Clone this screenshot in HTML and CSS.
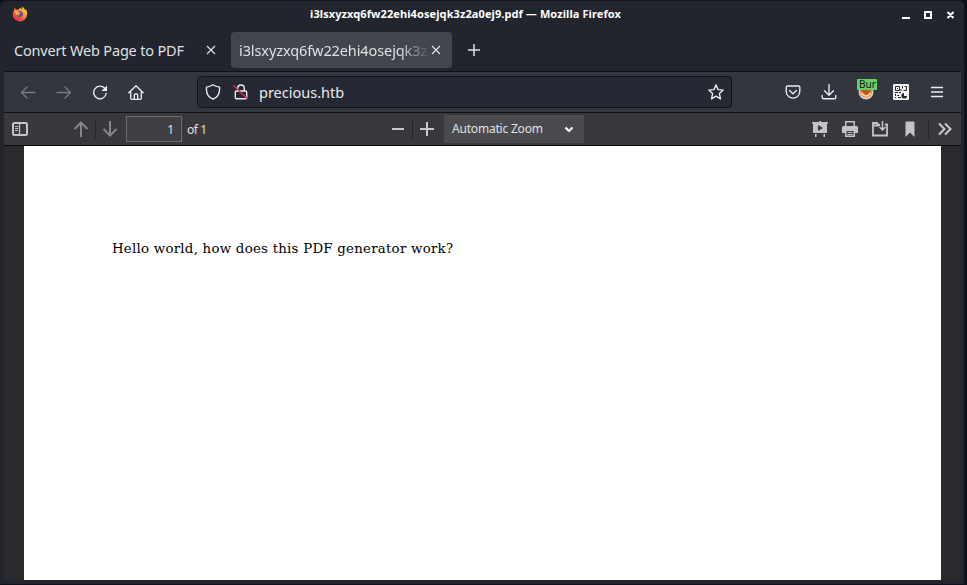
FILE: index.html
```html
<!DOCTYPE html>
<html lang="en">
<head>
<meta charset="utf-8">
<title>i3lsxyzxq6fw22ehi4osejqk3z2a0ej9.pdf — Mozilla Firefox</title>
<link rel="stylesheet" href="styles.css">
</head>
<body>
<div class="window">
  <header class="titlebar">
    <svg class="firefox" width="16" height="16" viewBox="0 0 16 16">
      <defs><linearGradient id="flame" x1="1" y1="0" x2="0.2" y2="1"><stop offset="0" stop-color="#ffe14d"/><stop offset=".4" stop-color="#ffa02e"/><stop offset=".75" stop-color="#f34b3c"/><stop offset="1" stop-color="#d82b55"/></linearGradient></defs>
      <path fill="url(#flame)" d="M2 4.2 2.6 2l2 1.7 2-.2C7.400 2.600 8 2 9.200 1.500c-.1 1 .2 1.600.8 2l.3-3c1 1.200 2.100 1.800 2.900 3.500l.8-.5c1.400 2.300 1.700 5 .4 7.500-1.200 2.800-3.700 4.500-6.600 4.500C3.600 15.500.8 12.500.8 8.600.8 6.800 1.200 5.400 2 4.200z"/>
      <path fill="#5a51b8" d="M5.200 5.400c1.600-.9 3.600-.8 4.900.5 1.300 1.500 1 3.900-.7 4.900-1.700.9-3.800.3-4.600-1.200 1.200.5 2.200.1 3-.8L5.400 7.500z"/>
      <path fill="#ffac32" d="m2.500 5 3-.1 1.100 1 1.900.5c-.2 1-1.300 1.100-1.700 2L4.200 9z"/>
    </svg>
    <h1 class="window-title">i3lsxyzxq6fw22ehi4osejqk3z2a0ej9.pdf — Mozilla Firefox</h1>
    <svg class="controls" width="54" height="12" viewBox="0 0 54 12" fill="none" stroke="#fff" stroke-width="2">
      <path d="M1 10h8M24 4h6v6h-6zM46.500 4l6 6M52.500 4l-6 6"/>
    </svg>
  </header>

  <nav class="tabs">
    <div class="tab">
      <span class="tab-label">Convert Web Page to PDF</span>
      <svg class="close" width="10" height="10" viewBox="0 0 10 10"><path d="m1 1 8 8M9 1 1 9"/></svg>
    </div>
    <div class="tab active">
      <span class="tab-label fade">i3lsxyzxq6fw22ehi4osejqk3z2</span>
      <svg class="close" width="10" height="10" viewBox="0 0 10 10"><path d="m1 1 8 8M9 1 1 9"/></svg>
    </div>
    <svg class="new-tab" width="14" height="14" viewBox="0 0 14 14"><path d="M7 1v12M1 7h12"/></svg>
  </nav>

  <div class="navbar">
    <svg class="icon dim back" width="16" height="16" viewBox="0 0 16 16"><path d="M15 8.500H1.500M7 3 1.500 8.500 7 14"/></svg>
    <svg class="icon dim forward" width="16" height="16" viewBox="0 0 16 16"><path d="M1 8.500h13.500M9 3 14.500 8.500 9 14"/></svg>
    <svg class="icon reload" width="16" height="16" viewBox="0 0 16 16"><path d="M14.200 9.500a6.300 6.300 0 1 1-1.500-5.200l1 1.200"/><path class="solid" d="M15 1.500v5.500H9.500z"/></svg>
    <svg class="icon home" width="16" height="16" viewBox="0 0 16 16"><path d="M.8 8.700 8 1.700l7.200 7M2.700 7.500V14c0 .8.500 1.300 1.200 1.300h8.200c.7 0 1.200-.5 1.200-1.300V7.500M6.300 15v-4c0-.7.400-1 1-1h1.400c.6 0 1 .3 1 1v4"/></svg>
    <div class="urlbar">
      <svg class="icon" width="16" height="16" viewBox="0 0 16 16"><path d="M8 .8c2 1.300 4 2 6.500 2.300.5 5.200-.8 9.700-6.500 12.100C2.300 12.800 1 8.300 1.500 3.100 4 2.800 6 2.100 8 .8z"/></svg>
      <svg class="icon lock" width="16" height="16" viewBox="0 0 16 16"><path d="M4.700 7V4.300a3.300 3.300 0 0 1 6.600 0V7M3.500 7h9c.8 0 1.200.4 1.200 1.200v5.300c0 .8-.4 1.200-1.200 1.200h-9c-.8 0-1.200-.4-1.200-1.200V8.200C2.300 7.400 2.700 7 3.500 7z"/><path class="slash" d="m.8 1.800 13.700 13"/></svg>
      <span class="url">precious.htb</span>
      <svg class="icon star" width="16" height="16" viewBox="0 0 16 16"><path d="m8 .9 2.100 4.700 5.100.5-3.800 3.500 1.100 5.200L8 12.200l-4.500 2.600 1.100-5.200L.8 6.100l5.100-.5z"/></svg>
    </div>
    <svg class="icon pocket" width="16" height="16" viewBox="0 0 16 16"><path d="M2.500 2h11c.8 0 1.300.5 1.300 1.300v4a6.800 6.800 0 0 1-13.600 0v-4C1.200 2.500 1.700 2 2.500 2zM4.500 6.500 8 9.800l3.500-3.300"/></svg>
    <svg class="icon download" width="16" height="16" viewBox="0 0 16 16"><path d="M8 .5v10.700M3.500 6.800 8 11.200l4.500-4.400M1.200 11.500v1.900c0 .8.500 1.300 1.300 1.300h11c.8 0 1.300-.5 1.300-1.300v-1.900"/></svg>
    <div class="proxy">
      <svg width="16" height="16" viewBox="0 0 16 16"><circle cx="8" cy="8" r="7.500" fill="#d5cbc2"/><circle cx="8" cy="7.500" r="6" fill="#ed8b35"/><path d="M2 5h12l-3 4.500-3 1.500-3-2z" fill="#b95921"/><path d="M3.500 9q4.500 6 9 0" stroke="#ffd4a0" stroke-width="1.500" fill="none"/></svg>
      <span class="badge">Bur</span>
    </div>
    <svg class="qr" width="16" height="16" viewBox="0 0 16 16" fill="none" stroke="#24262c"><rect width="16" height="16" rx="1" fill="#f4f4f5" stroke="none"/><path d="M2.500 2.500h4v4h-4zM9.500 2v2.500M11.500 2.500h2v4h-3M4 4.500h1M8 5v2M2 8.500h3M6 8.500h2M2.500 10v2M4 11.500h2M5 13.500h3M2 13.500h1"/><path d="M11 9v3h3a2.800 2.800 0 1 1-3-3z" fill="#24262c" stroke="none"/></svg>
    <svg class="icon menu" width="12" height="12" viewBox="0 0 12 12"><path d="M0 1.500h12M0 6h12M0 10.500h12"/></svg>
  </div>

  <div class="pdfbar">
    <svg class="sidebar" width="16" height="14" viewBox="0 0 16 14" fill="none" stroke="#c4c4c8"><rect x="1" y="1" width="14" height="12" rx="1.500" stroke-width="2"/><path d="M7.500 1v12" stroke-width="1.300"/><path d="M3 4.500h3M3 6.500h3M3 8.500h3"/></svg>
    <svg class="pdim up" width="16" height="16" viewBox="0 0 16 16"><path d="M8 16V1.500M1.500 8 8 1.500 14.500 8"/></svg>
    <i class="sep"></i>
    <svg class="pdim down" width="16" height="16" viewBox="0 0 16 16"><path d="M8 0v14.500M1.500 8 8 14.500 14.500 8"/></svg>
    <div class="page-number">1</div>
    <span class="page-count">of 1</span>
    <svg class="picon minus" width="12" height="14" viewBox="0 0 12 14"><path d="M0 7h12"/></svg>
    <i class="sep sep-zoom"></i>
    <svg class="picon plus" width="14" height="14" viewBox="0 0 14 14"><path d="M7 0v14M0 7h14"/></svg>
    <div class="zoom"><span class="zoom-label">Automatic Zoom</span><svg width="10" height="8" viewBox="0 0 10 8"><path d="m1.500 2.500 3.500 3.500L8.500 2.500" fill="none" stroke="#fff" stroke-width="2.200"/></svg></div>
    <div class="tools">
      <svg width="16" height="16" viewBox="0 0 16 16"><path fill="#c4c4c8" fill-rule="evenodd" d="M7 0h2v1h7v1.500h-1V12H1V2.500H0V1h7zM6 4v6l5-3zM3 13h1.500v3H3zM11.500 13H13v3h-1.500z"/></svg>
      <svg width="16" height="16" viewBox="0 0 16 16"><path fill="#c4c4c8" fill-rule="evenodd" d="M3 0h10v5h1.500q1.500 0 1.500 1.500V12h-3v4H3v-4H0V6.500Q0 5 1.500 5H3zM4.500 1.500V5h7V1.500zM4.500 10v4.500h7V10zM5.500 11h5v1h-5zM5.500 13h5v1h-5z"/></svg>
      <svg width="16" height="16" viewBox="0 0 16 16" fill="none" stroke="#c4c4c8" stroke-width="1.800"><path d="M8 4H6.500L5 2H1v12.500h14V3.500h-2M1 4.500h6"/><path d="M10.500 0v9M7.500 6l3 3 3-3" stroke-width="1.500"/></svg>
      <svg width="16" height="16" viewBox="0 0 16 16"><path fill="#c4c4c8" d="M3.500 1.500q0-1 1-1h7q1 0 1 1V16L8 11.500 3.500 16z"/></svg>
    </div>
    <i class="sep sep-tools"></i>
    <svg class="picon more" width="14" height="14" viewBox="0 0 14 14"><path d="M1 1.500 6.500 7 1 12.500M7 1.500 12.500 7 7 12.500"/></svg>
  </div>

  <main class="viewer"><div class="page"><p class="text">Hello world, how does this PDF generator work?</p></div></main>
</div>
</body>
</html>
```
FILE: styles.css
```css
* { box-sizing: border-box; }
body {
  margin: 0;
  width: 967px;
  height: 585px;
  overflow: hidden;
  background: #0f1119;
  font-family: "Noto Sans", sans-serif;
}
svg { display: block; flex: none; }
.window {
  width: 965px;
  height: 584px;
  border-top: 1px solid #12141c;
  border-right: 1px solid #12141c;
  border-radius: 6px 6px 0 0;
  background: #22252e;
  display: flex;
  flex-direction: column;
}
.titlebar { height: 27px; flex: none; display: flex; align-items: center; padding-bottom: 2px; }
.firefox { margin-left: 12px; }
.window-title {
  margin: 0 0 0 282px;
  width: 311px;
  font-size: 11px;
  line-height: 16px;
  font-weight: 700;
  letter-spacing: 0.09px;
  color: #fff;
  white-space: nowrap;
}
.controls { margin-left: 280px; }
.tabs { height: 43px; flex: none; display: flex; align-items: center; padding-left: 4px; }
.tab {
  width: 221px;
  height: 36px;
  padding: 0 9px 0 10px;
  margin-right: 6px;
  border-radius: 4px;
  display: flex;
  align-items: center;
  justify-content: space-between;
}
.tab.active { padding: 0 11px 0 8px; background: #42454d; }
.tab-label { font-size: 14.500px; line-height: 20px; letter-spacing: -0.18px; color: #dfe0e3; white-space: nowrap; }
.tab.active .tab-label { width: 190px; letter-spacing: -0.1px; }
.fade { -webkit-mask-image: linear-gradient(90deg, #000 160px, transparent 192px); mask-image: linear-gradient(90deg, #000 160px, transparent 192px); }
.close, .new-tab { fill: none; stroke: #dfe0e3; stroke-width: 1.200; }
.new-tab { margin-left: 9px; stroke-width: 1.500; }
.navbar {
  height: 42px;
  flex: none;
  margin: 0 3px 0 4px;
  border-top: 1px solid #101219;
  border-bottom: 1px solid #101219;
  background: #33363e;
  display: flex;
  align-items: center;
}
.icon { fill: none; stroke: #ececf0; stroke-width: 1.350; stroke-linejoin: round; stroke-linecap: round; }
.dim { stroke: #777a80; }
.solid { fill: #ececf0; stroke: none; }
.slash { stroke: #e22850; stroke-width: 1.500; }
.back { margin-left: 16px; }
.forward { margin-left: 20px; }
.reload { margin-left: 20px; }
.home { margin-left: 20px; }
.urlbar {
  width: 535px;
  height: 32px;
  margin-left: 53px;
  padding: 0 7px;
  border: 1px solid #101219;
  border-radius: 4px;
  background: #262933;
  display: flex;
  align-items: center;
}
.lock { margin-left: 12px; }
.url { margin-left: 10px; font-size: 14.500px; line-height: 20px; color: #e8e8eb; }
.star { margin-left: auto; }
.pocket { margin-left: 53px; }
.download { margin-left: 20px; }
.proxy { position: relative; width: 16px; height: 16px; margin-left: 21px; }
.badge {
  position: absolute;
  left: -1px;
  top: -5px;
  width: 20px;
  height: 11px;
  overflow: hidden;
  border-radius: 1px;
  background: #65cf68;
  color: #101810;
  font-size: 10px;
  line-height: 11px;
  padding-left: 2px;
}
.qr { margin-left: 19px; }
.menu { margin-left: 22px; stroke-linecap: butt; }
.pdfbar {
  height: 33px;
  flex: none;
  margin: 0 3px 0 4px;
  border-bottom: 1px solid #08080b;
  background: #38383d;
  display: flex;
  align-items: center;
  color: #e1e1e4;
  font-size: 12px;
}
.sidebar { margin-left: 8px; }
.pdim { fill: none; stroke: #85858a; stroke-width: 2; }
.up { margin-left: 45px; }
.sep { width: 1px; height: 20px; flex: none; margin-left: 6px; background: #242529; }
.down { margin-left: 6px; }
.page-number {
  width: 56px;
  height: 26px;
  margin-left: 8px;
  padding-right: 7px;
  border: 1px solid #6b6b70;
  background: #3f3f44;
  line-height: 26px;
  text-align: right;
}
.page-count { width: 24px; margin-left: 5px; white-space: nowrap; letter-spacing: -0.4px; }
.picon { fill: none; stroke: #c9c9cd; stroke-width: 2; }
.minus { margin-left: 181px; }
.sep-zoom { margin-left: 8px; }
.plus { margin-left: 7px; }
.zoom {
  width: 140px;
  height: 28px;
  margin-left: 10px;
  padding: 0 10px 0 8px;
  background: #4a4a4f;
  display: flex;
  align-items: center;
  justify-content: space-between;
}
.zoom-label { white-space: nowrap; line-height: 18px; letter-spacing: -0.2px; }
.tools { display: flex; gap: 14px; margin-left: 228px; }
.sep-tools { margin-left: 10px; }
.more { margin-left: 9px; }
.viewer { height: 434px; flex: none; margin: 0 3px 0 4px; background: #2a2a2e; display: flex; }
.page { width: 917px; margin-left: 20px; background: #fff; }
.text {
  margin: 93px 0 0 88px;
  font-family: "DejaVu Serif", serif;
  font-size: 13.330px;
  letter-spacing: 0.25px;
  line-height: 20px;
  color: #000;
  white-space: nowrap;
}
```
